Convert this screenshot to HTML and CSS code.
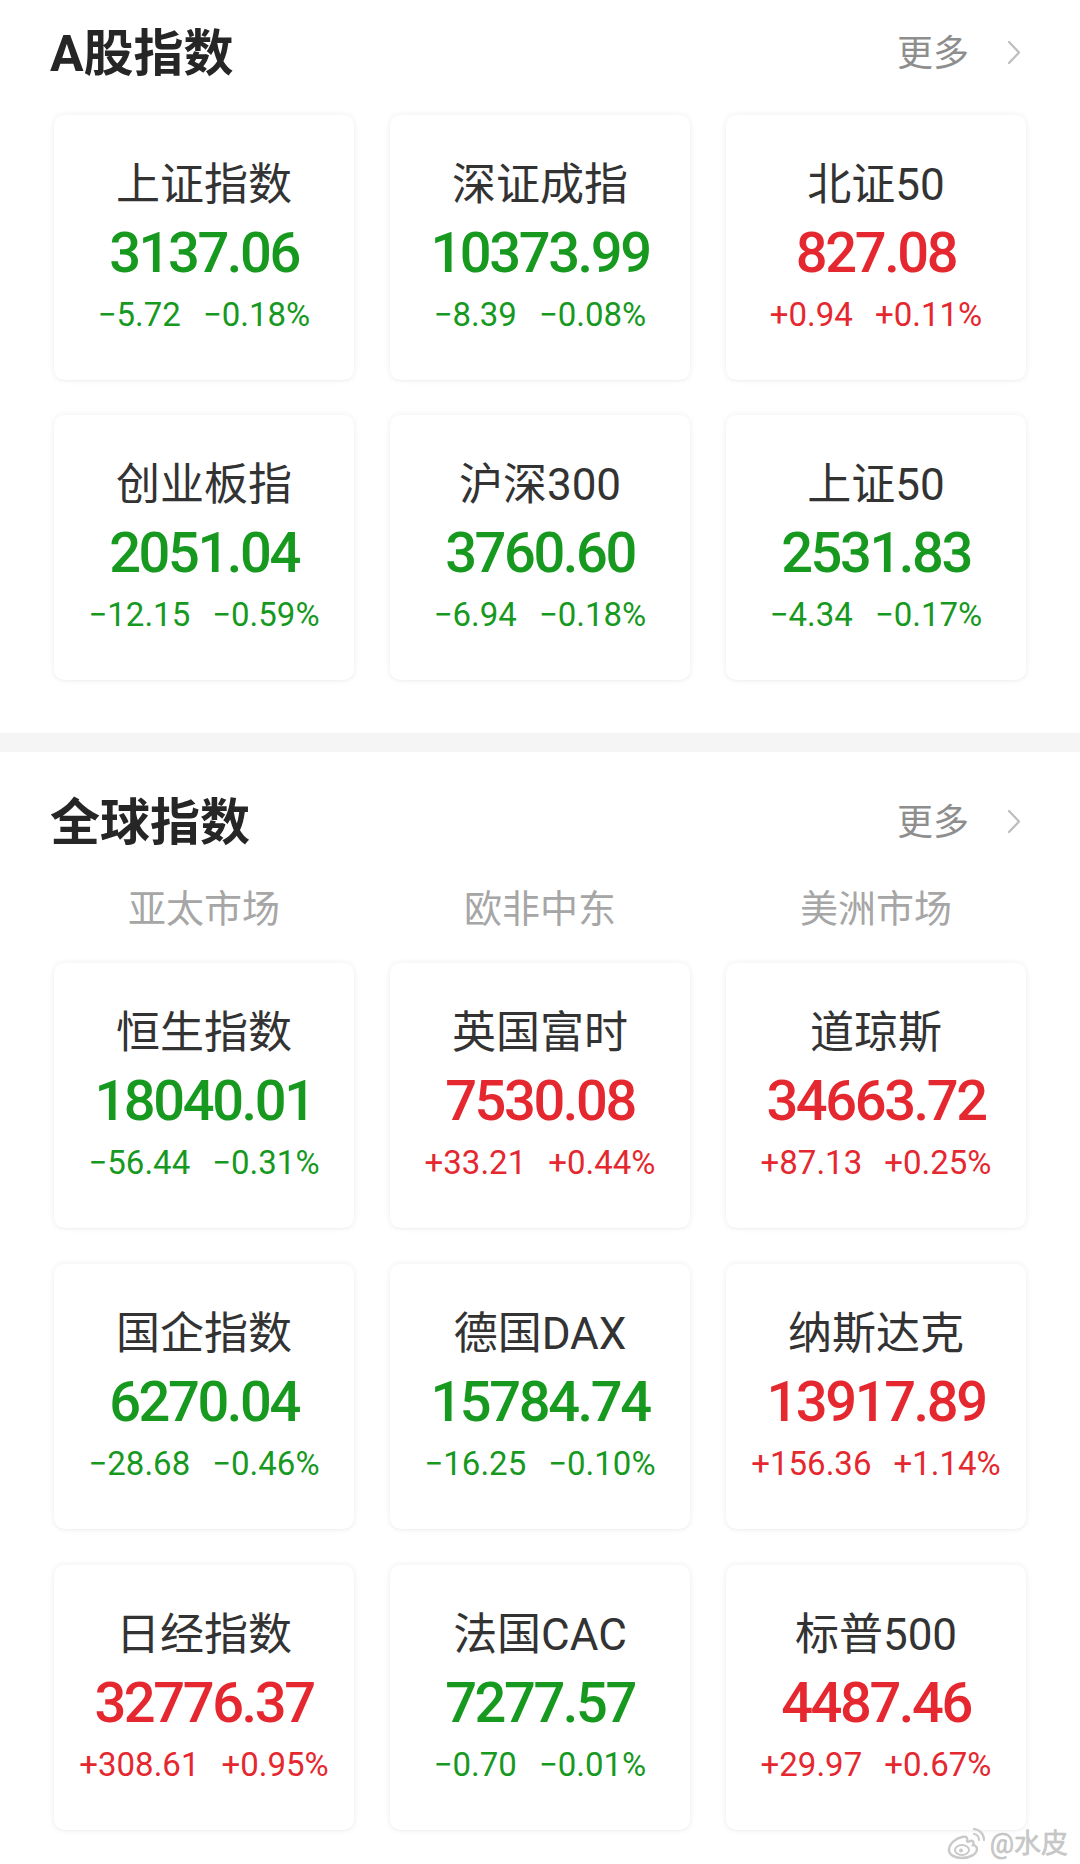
FILE: index.html
```html
<!DOCTYPE html>
<html lang="zh-CN">
<head>
<meta charset="utf-8">
<title>指数</title>
<link rel="stylesheet" href="styles.css">
</head>
<body>
<div class="page">
  <section class="section section-a">
    <div class="sec-head">
      <h2 class="sec-title">A股指数</h2>
      <a class="more">更多<svg class="chev" width="14" height="25" viewBox="0 0 14 25"><polyline points="2,2 12,12.5 2,23" fill="none" stroke="#bdbdbd" stroke-width="2.2" stroke-linecap="round" stroke-linejoin="round"/></svg></a>
    </div>
    <div class="grid">
      <div class="card"><div class="name">上证指数</div><div class="val down">3137.06</div><div class="chg down"><span>−5.72</span><span>−0.18%</span></div></div>
      <div class="card"><div class="name">深证成指</div><div class="val down">10373.99</div><div class="chg down"><span>−8.39</span><span>−0.08%</span></div></div>
      <div class="card"><div class="name">北证50</div><div class="val up">827.08</div><div class="chg up"><span>+0.94</span><span>+0.11%</span></div></div>
      <div class="card"><div class="name">创业板指</div><div class="val down">2051.04</div><div class="chg down"><span>−12.15</span><span>−0.59%</span></div></div>
      <div class="card"><div class="name">沪深300</div><div class="val down">3760.60</div><div class="chg down"><span>−6.94</span><span>−0.18%</span></div></div>
      <div class="card"><div class="name">上证50</div><div class="val down">2531.83</div><div class="chg down"><span>−4.34</span><span>−0.17%</span></div></div>
    </div>
  </section>

  <div class="band"></div>

  <section class="section section-g">
    <div class="sec-head">
      <h2 class="sec-title">全球指数</h2>
      <a class="more">更多<svg class="chev" width="14" height="25" viewBox="0 0 14 25"><polyline points="2,2 12,12.5 2,23" fill="none" stroke="#bdbdbd" stroke-width="2.2" stroke-linecap="round" stroke-linejoin="round"/></svg></a>
    </div>
    <div class="tabs">
      <span>亚太市场</span><span>欧非中东</span><span>美洲市场</span>
    </div>
    <div class="grid grid-g">
      <div class="card"><div class="name">恒生指数</div><div class="val down">18040.01</div><div class="chg down"><span>−56.44</span><span>−0.31%</span></div></div>
      <div class="card"><div class="name">英国富时</div><div class="val up">7530.08</div><div class="chg up"><span>+33.21</span><span>+0.44%</span></div></div>
      <div class="card"><div class="name">道琼斯</div><div class="val up">34663.72</div><div class="chg up"><span>+87.13</span><span>+0.25%</span></div></div>
      <div class="card"><div class="name">国企指数</div><div class="val down">6270.04</div><div class="chg down"><span>−28.68</span><span>−0.46%</span></div></div>
      <div class="card"><div class="name">德国DAX</div><div class="val down">15784.74</div><div class="chg down"><span>−16.25</span><span>−0.10%</span></div></div>
      <div class="card"><div class="name">纳斯达克</div><div class="val up">13917.89</div><div class="chg up"><span>+156.36</span><span>+1.14%</span></div></div>
      <div class="card"><div class="name">日经指数</div><div class="val up">32776.37</div><div class="chg up"><span>+308.61</span><span>+0.95%</span></div></div>
      <div class="card"><div class="name">法国CAC</div><div class="val down">7277.57</div><div class="chg down"><span>−0.70</span><span>−0.01%</span></div></div>
      <div class="card"><div class="name">标普500</div><div class="val up">4487.46</div><div class="chg up"><span>+29.97</span><span>+0.67%</span></div></div>
    </div>
  </section>

  <div class="watermark">
    <svg class="wb" width="40" height="32" viewBox="0 0 40 32">
      <path d="M16 9c-6 1-13 7-13 13 0 5 6 8 13 8 8 0 15-4 15-9 0-3-3-4-4-4 1-2 1-5-3-4-2 1-3 1-3 0 1-3 0-5-5-4z" fill="none" stroke="#c9c9c9" stroke-width="2.4"/>
      <ellipse cx="16" cy="22" rx="7" ry="5" fill="none" stroke="#c9c9c9" stroke-width="2"/>
      <circle cx="15" cy="22.5" r="2" fill="#c9c9c9"/>
      <path d="M28 6a6 6 0 0 1 5 6" fill="none" stroke="#c9c9c9" stroke-width="2.2" stroke-linecap="round"/>
      <path d="M28 1a11 11 0 0 1 10 11" fill="none" stroke="#c9c9c9" stroke-width="2.2" stroke-linecap="round"/>
    </svg>
    <span class="wm-text">@水皮</span>
  </div>
</div>
</body>
</html>
```

FILE: styles.css
```css
* { box-sizing: border-box; }

html, body {
  margin: 0;
  padding: 0;
  background: #ffffff;
}

body {
  font-family: "Roboto", "Noto Sans CJK SC", sans-serif;
  color: #333333;
}

.page {
  position: relative;
  width: 1080px;
  min-height: 1864px;
  background: #ffffff;
}

.sec-head {
  height: 108px;
  display: flex;
  align-items: center;
  justify-content: space-between;
  padding: 0 59px 0 50px;
}

.sec-title {
  margin: 0;
  font-size: 50px;
  font-weight: 700;
  color: #262626;
  line-height: 60px;
}

.more {
  display: flex;
  align-items: center;
  gap: 38px;
  font-size: 36px;
  line-height: 44px;
  color: #8e8e8e;
}

.chev { display: block; margin-top: -4px; }

.grid {
  display: grid;
  grid-template-columns: repeat(3, 300px);
  column-gap: 36px;
  row-gap: 35px;
  padding: 0 54px;
  margin-top: 7px;
}

.grid-g {
  margin-top: 22px;
  row-gap: 36px;
}

.card {
  height: 265px;
  background: #ffffff;
  border-radius: 10px;
  box-shadow: 0 0 7px rgba(0, 0, 0, 0.07), 0 1px 2px rgba(0, 0, 0, 0.03);
  display: flex;
  flex-direction: column;
  align-items: center;
  padding-top: 44px;
}

.name {
  font-size: 44px;
  line-height: 52px;
  color: #333333;
  font-weight: 400;
  white-space: nowrap;
}

.val {
  margin-top: 10px;
  font-size: 56px;
  line-height: 64px;
  font-weight: 500;
  letter-spacing: -2.4px;
  white-space: nowrap;
}

.chg {
  margin-top: 10px;
  display: flex;
  gap: 22px;
  font-size: 33px;
  line-height: 40px;
  white-space: nowrap;
}

.down { color: #17991f; }
.up { color: #e5282f; }

.band {
  height: 19px;
  margin-top: 53px;
  background: #f5f5f5;
}

.section-g .sec-head { margin-top: 17px; }

.tabs {
  display: grid;
  grid-template-columns: repeat(3, 300px);
  column-gap: 36px;
  padding: 0 54px;
  height: 64px;
  align-items: center;
}

.tabs span {
  text-align: center;
  font-size: 38px;
  line-height: 46px;
  color: #a6a6a6;
}

.watermark {
  position: absolute;
  right: 12px;
  bottom: 4px;
  display: flex;
  align-items: center;
  gap: 4px;
}

.wm-text {
  font-size: 27px;
  line-height: 32px;
  color: #c9c9c9;
  -webkit-text-stroke: 0.5px #bdbdbd;
}
```
